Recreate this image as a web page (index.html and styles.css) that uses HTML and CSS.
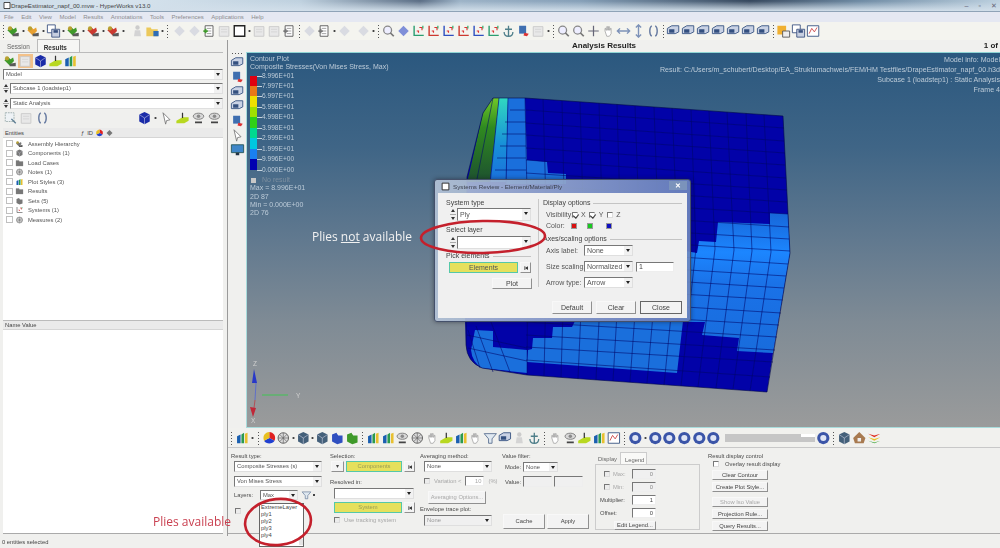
FILE: index.html
```html
<!DOCTYPE html>
<html lang="en">
<head>
<meta charset="utf-8">
<title>HyperWorks</title>
<link rel="stylesheet" href="styles.css">
</head>
<body>
<svg class="defs" width="0" height="0" aria-hidden="true">
  <symbol id="i-layer" viewBox="0 0 16 16"><path d="M1 7l4-4 3 3 3-2 1 4-5 5z" fill="currentColor"/><path d="M7 11l7-1v4H7z" fill="#5a5a5a"/><circle cx="4" cy="5" r="2.4" fill="#b8a030"/></symbol>
  <symbol id="i-folder" viewBox="0 0 16 16"><path d="M1 4h5l1 2h7v8H1z" fill="currentColor"/><path d="M9 8h6v6H9z" fill="#2f6db5"/></symbol>
  <symbol id="i-floppy" viewBox="0 0 16 16"><path d="M1 1h9v9H1z" fill="#fff" stroke="#39507f"/><path d="M6 6h9v9H6z" fill="#c7cfe0" stroke="#39507f"/><path d="M8 7h5v3H8z" fill="#39507f"/></symbol>
  <symbol id="i-doc" viewBox="0 0 16 16"><path d="M3 2h9v12H3z" fill="#fff" stroke="#555"/><path d="M5 5h5M5 8h5M5 11h5" stroke="#999"/><path d="M1 8h5M3.500 5.500v5" stroke="currentColor" stroke-width="2"/></symbol>
  <symbol id="i-square" viewBox="0 0 16 16"><path d="M2 2h12v12H2z" fill="#fff" stroke="#222" stroke-width="1.600"/></symbol>
  <symbol id="i-dim" viewBox="0 0 16 16"><path d="M2 3h11v11H2z" fill="#e8e8e8" stroke="#c8c8c8"/><path d="M4 6h7M4 9h7" stroke="#d4d4d4"/></symbol>
  <symbol id="i-diamond" viewBox="0 0 16 16"><path d="M8 2l6 6-6 6-6-6z" fill="currentColor"/></symbol>
  <symbol id="i-zoom" viewBox="0 0 16 16"><circle cx="7" cy="7" r="4.500" fill="#eef" stroke="#888" stroke-width="1.500"/><path d="M10 10l4 4" stroke="#777" stroke-width="2"/></symbol>
  <symbol id="i-axis" viewBox="0 0 16 16"><path d="M3 2v11h11" fill="none" stroke="currentColor" stroke-width="1.600"/><path d="M9 4h3v3M6 8h2v2" fill="none" stroke="#d33" stroke-width="1.300"/><path d="M13 2v3" stroke="#2a6" stroke-width="1.300"/></symbol>
  <symbol id="i-anchor" viewBox="0 0 16 16"><path d="M8 2v12M4 6h8M3 9c0 4 3 5 5 5s5-1 5-5" fill="none" stroke="#4f7f8a" stroke-width="1.500"/></symbol>
  <symbol id="i-flag" viewBox="0 0 16 16"><path d="M3 2h8v9H3z" fill="#3f6fb0"/><path d="M9 10l5 1-2 3-4-1z" fill="#d33"/></symbol>
  <symbol id="i-hand" viewBox="0 0 16 16"><path d="M4 8V5h1v2h1V3h1v4h1V3h1v4h1V5h1v6l-2 3H6z" fill="#fff" stroke="#999" stroke-width=".8"/></symbol>
  <symbol id="i-arrows" viewBox="0 0 16 16"><path d="M1 8h14M4 5L1 8l3 3M12 5l3 3-3 3" fill="none" stroke="#7d92b8" stroke-width="1.600"/></symbol>
  <symbol id="i-varrows" viewBox="0 0 16 16"><path d="M8 1v14M5 4l3-3 3 3M5 12l3 3 3-3" fill="none" stroke="#7d92b8" stroke-width="1.600"/></symbol>
  <symbol id="i-cross" viewBox="0 0 16 16"><path d="M8 2v12M2 8h12" fill="none" stroke="#667" stroke-width="1.400"/></symbol>
  <symbol id="i-brace" viewBox="0 0 16 16"><path d="M6 2C3 4 3 12 6 14M10 2c3 2 3 10 0 12" fill="none" stroke="#667aa0" stroke-width="1.600"/></symbol>
  <symbol id="i-view" viewBox="0 0 16 16"><path d="M1 5l5-3h8v7l-4 2H1z" fill="#c9d2e4" stroke="#34507f"/><path d="M3 6h6v4H3z" fill="#34507f"/></symbol>
  <symbol id="i-orange" viewBox="0 0 16 16"><path d="M1 2h10v10H1z" fill="#f0b030"/><path d="M7 8h8v7H7z" fill="#eee" stroke="#555"/></symbol>
  <symbol id="i-graph" viewBox="0 0 16 16"><path d="M1 2h13v12H1z" fill="#fff" stroke="#34507f"/><path d="M3 11l3-6 3 4 3-5" fill="none" stroke="#c44"/></symbol>
  <symbol id="i-bars" viewBox="0 0 16 16"><path d="M2 6l4-2v10H2z" fill="#1a5fb0"/><path d="M7 4l3-2v12H7z" fill="#2a9a50"/><path d="M11 3l3-1v12h-3z" fill="#e8c030"/></symbol>
  <symbol id="i-wheel" viewBox="0 0 16 16"><path d="M8 8V1a7 7 0 0 1 6 10z" fill="#e02020"/><path d="M8 8l6 3a7 7 0 0 1-12 0z" fill="#2040d0"/><path d="M8 8l-6 3A7 7 0 0 1 8 1z" fill="#e8c020"/></symbol>
  <symbol id="i-mesh" viewBox="0 0 16 16"><circle cx="8" cy="8" r="6" fill="#ddd" stroke="#555"/><path d="M2 8h12M8 2v12M4 4l8 8M12 4l-8 8" stroke="#666" stroke-width=".8"/></symbol>
  <symbol id="i-cube" viewBox="0 0 16 16"><path d="M8 1l6 3v8l-6 3-6-3V4z" fill="currentColor"/><path d="M8 8l6-4M8 8L2 4M8 8v7" stroke="#dde" stroke-width=".6"/></symbol>
  <symbol id="i-green" viewBox="0 0 16 16"><path d="M2 4l5-2 2 3h5v8l-6 2-6-3z" fill="currentColor"/></symbol>
  <symbol id="i-play" viewBox="0 0 16 16"><circle cx="8" cy="8" r="7" fill="currentColor"/><circle cx="8" cy="8" r="3.500" fill="#dfe5f5"/></symbol>
  <symbol id="i-house" viewBox="0 0 16 16"><path d="M8 1l7 7-2 6H3L1 8z" fill="#a87a50"/><path d="M6 8h4v4H6z" fill="#eee"/></symbol>
  <symbol id="i-stack" viewBox="0 0 16 16"><path d="M1 3l7 2 7-2-7 4z" fill="#e03020"/><path d="M1 7l7 2 7-2-7 4z" fill="#e8c020"/><path d="M1 11l7 2 7-2-7 3z" fill="#30a030"/></symbol>
  <symbol id="i-funnel" viewBox="0 0 16 16"><path d="M1 3h14l-5 6v5H6V9z" fill="#dfe8f0" stroke="#5a7090"/></symbol>
  <symbol id="i-disc" viewBox="0 0 16 16"><ellipse cx="8" cy="6" rx="6" ry="3.500" fill="#d8d8d8" stroke="#777"/><circle cx="8" cy="6" r="2" fill="#8a8a8a"/><path d="M4 13h8" stroke="#444" stroke-width="2"/></symbol>
  <symbol id="i-plate" viewBox="0 0 16 16"><path d="M1 11l7-4h7v4l-5 3H1z" fill="#b8d820"/><path d="M8 2v6" stroke="#333" stroke-width="1.400"/></symbol>
  <symbol id="i-pointer" viewBox="0 0 16 16"><path d="M4 2l8 8-4 1-1 4z" fill="#fff" stroke="#777"/></symbol>
  <symbol id="i-corner" viewBox="0 0 16 16"><path d="M2 2h10v10H2z" fill="#eef2f5" stroke="#9aa" stroke-dasharray="2 1"/><path d="M9 9l5 5" stroke="#5a7a90" stroke-width="1.500"/></symbol>
  <symbol id="i-person" viewBox="0 0 16 16"><circle cx="8" cy="4" r="2.500" fill="#ccc"/><path d="M4 14l1-7h6l1 7z" fill="#d4d4d4"/></symbol>
  <symbol id="i-tree" viewBox="0 0 16 16"><path d="M1 3h6l1 2h7v9H1z" fill="currentColor" stroke="#888" stroke-width=".6"/></symbol>
  <symbol id="i-skip" viewBox="0 0 16 16"><path d="M4 3h2v10H4zM13 3v10L6 8z" fill="#222"/></symbol>
  <symbol id="i-monitor" viewBox="0 0 16 16"><path d="M1 2h14v9H1z" fill="#3f86c8" stroke="#255"/><path d="M6 11h4v3H6z" fill="#234"/></symbol>
</svg>

<div class="app">
  <header class="title">
    <svg class="ic-t"><use href="#i-square"/></svg>
    <span class="title-text">DrapeEstimator_napf_00.mvw - HyperWorks v13.0</span>
    <span class="winbtns"><i>–</i><i>▫</i><i>✕</i></span>
  </header>
  <nav class="menu"><span>File</span><span>Edit</span><span>View</span><span>Model</span><span>Results</span><span>Annotations</span><span>Tools</span><span>Preferences</span><span>Applications</span><span>Help</span></nav>
  <div class="toolbar">
    <b class="sep"></b>
    <svg class="ic green"><use href="#i-layer"/></svg><em class="dot"></em>
    <svg class="ic orange"><use href="#i-layer"/></svg><em class="dot"></em>
    <svg class="ic"><use href="#i-floppy"/></svg><em class="dot"></em>
    <svg class="ic green"><use href="#i-layer"/></svg><em class="dot"></em>
    <svg class="ic red"><use href="#i-layer"/></svg><em class="dot"></em>
    <svg class="ic red"><use href="#i-layer"/></svg><em class="dot"></em>
    <svg class="ic ml4"><use href="#i-person"/></svg>
    <svg class="ic yellow"><use href="#i-folder"/></svg><em class="dot"></em>
    <b class="sep"></b>
    <svg class="ic pale ml2"><use href="#i-diamond"/></svg>
    <svg class="ic pale"><use href="#i-diamond"/></svg>
    <svg class="ic green"><use href="#i-doc"/></svg>
    <svg class="ic"><use href="#i-dim"/></svg>
    <svg class="ic"><use href="#i-square"/></svg><em class="dot"></em>
    <svg class="ic"><use href="#i-dim"/></svg>
    <svg class="ic"><use href="#i-dim"/></svg>
    <svg class="ic"><use href="#i-doc"/></svg>
    <b class="sep"></b>
    <svg class="ic pale"><use href="#i-diamond"/></svg>
    <svg class="ic"><use href="#i-doc"/></svg><em class="dot"></em>
    <svg class="ic pale"><use href="#i-diamond"/></svg>
    <svg class="ic pale ml4"><use href="#i-diamond"/></svg><em class="dot"></em>
    <b class="sep"></b>
    <svg class="ic"><use href="#i-zoom"/></svg>
    <svg class="ic violet"><use href="#i-diamond"/></svg>
    <svg class="ic teal"><use href="#i-axis"/></svg>
    <svg class="ic red"><use href="#i-axis"/></svg>
    <svg class="ic blue"><use href="#i-axis"/></svg>
    <svg class="ic red"><use href="#i-axis"/></svg>
    <svg class="ic blue"><use href="#i-axis"/></svg>
    <svg class="ic teal"><use href="#i-axis"/></svg>
    <svg class="ic"><use href="#i-anchor"/></svg>
    <svg class="ic"><use href="#i-flag"/></svg>
    <svg class="ic"><use href="#i-dim"/></svg><em class="dot"></em>
    <b class="sep"></b>
    <svg class="ic"><use href="#i-zoom"/></svg>
    <svg class="ic"><use href="#i-zoom"/></svg>
    <svg class="ic"><use href="#i-cross"/></svg>
    <svg class="ic"><use href="#i-hand"/></svg>
    <svg class="ic"><use href="#i-arrows"/></svg>
    <svg class="ic"><use href="#i-varrows"/></svg>
    <svg class="ic"><use href="#i-brace"/></svg>
    <b class="sep"></b>
    <svg class="ic"><use href="#i-view"/></svg>
    <svg class="ic"><use href="#i-view"/></svg>
    <svg class="ic"><use href="#i-view"/></svg>
    <svg class="ic"><use href="#i-view"/></svg>
    <svg class="ic"><use href="#i-view"/></svg>
    <svg class="ic"><use href="#i-view"/></svg>
    <svg class="ic"><use href="#i-view"/></svg>
    <b class="sep"></b>
    <svg class="ic"><use href="#i-orange"/></svg>
    <svg class="ic"><use href="#i-floppy"/></svg>
    <svg class="ic"><use href="#i-graph"/></svg>
  </div>

  <div class="work">
    <aside class="left">
      <div class="tabs"><span class="tab">Session</span><span class="tab active">Results</span></div>
      <div class="iconrow">
        <svg class="ic green"><use href="#i-layer"/></svg>
        <svg class="ic pressed"><use href="#i-dim"/></svg>
        <svg class="ic navy"><use href="#i-cube"/></svg>
        <svg class="ic red"><use href="#i-plate"/></svg>
        <svg class="ic"><use href="#i-bars"/></svg>
      </div>
      <div class="combo full"><span>Model</span></div>
      <div class="spin-row"><span class="spin"></span><div class="combo grow"><span>Subcase 1 (loadstep1)</span></div></div>
      <div class="spin-row"><span class="spin"></span><div class="combo grow"><span>Static Analysis</span></div></div>
      <div class="tools">
        <svg class="ic"><use href="#i-corner"/></svg>
        <svg class="ic"><use href="#i-dim"/></svg>
        <svg class="ic"><use href="#i-brace"/></svg>
        <span class="fill"></span>
        <svg class="ic navy"><use href="#i-cube"/></svg><em class="dot"></em>
        <svg class="ic"><use href="#i-pointer"/></svg>
        <svg class="ic"><use href="#i-plate"/></svg>
        <svg class="ic"><use href="#i-disc"/></svg>
        <svg class="ic"><use href="#i-disc"/></svg>
      </div>
      <div class="listhead"><span>Entities</span><span class="headicons"><i>ƒ</i><i>ID</i><svg class="mini"><use href="#i-wheel"/></svg><svg class="mini violet"><use href="#i-diamond"/></svg></span></div>
      <ul class="tree">
        <li class="indent"><svg class="mini"><use href="#i-layer"/></svg>Assembly Hierarchy</li>
        <li><svg class="mini navy"><use href="#i-cube"/></svg>Components (1)</li>
        <li><svg class="mini yellow"><use href="#i-tree"/></svg>Load Cases</li>
        <li><svg class="mini"><use href="#i-mesh"/></svg>Notes (1)</li>
        <li><svg class="mini"><use href="#i-bars"/></svg>Plot Styles (3)</li>
        <li><svg class="mini yellow"><use href="#i-tree"/></svg>Results</li>
        <li><svg class="mini green"><use href="#i-green"/></svg>Sets  (5)</li>
        <li><svg class="mini yellow"><use href="#i-axis"/></svg>Systems (1)</li>
        <li><svg class="mini"><use href="#i-mesh"/></svg>Measures (2)</li>
      </ul>
      <div class="listhead second"><span>Name Value</span></div>
      <div class="props"></div>
    </aside>

    <main class="right">
      <div class="caption"><span class="cap-title">Analysis Results</span><span class="cap-page">1 of</span></div>
      <div class="viewrow">
        <div class="vstrip">
          <b class="hdots"></b>
          <svg class="ic red"><use href="#i-view"/></svg>
          <svg class="ic"><use href="#i-flag"/></svg>
          <svg class="ic"><use href="#i-view"/></svg>
          <svg class="ic"><use href="#i-view"/></svg>
          <svg class="ic"><use href="#i-flag"/></svg>
          <svg class="ic"><use href="#i-pointer"/></svg>
          <svg class="ic"><use href="#i-monitor"/></svg>
        </div>
        <section class="viewport">
          <svg class="mesh" viewBox="246 52 754 376" aria-hidden="true">
            <defs>
              <linearGradient id="teal" x1="0" y1="0" x2="0" y2="1"><stop offset="0" stop-color="#30d8c0"/><stop offset=".55" stop-color="#1890d8"/><stop offset="1" stop-color="#1a6fdc"/></linearGradient>
              <linearGradient id="olive" x1="0" y1="0" x2="0" y2="1"><stop offset="0" stop-color="#70c828"/><stop offset=".35" stop-color="#2f8a20"/><stop offset="1" stop-color="#1d5030"/></linearGradient>
              <linearGradient id="lit" x1="0" y1="0" x2="0" y2="1"><stop offset="0" stop-color="#1766d8"/><stop offset=".28" stop-color="#1c86ff"/><stop offset=".5" stop-color="#1a72e8"/><stop offset="1" stop-color="#186cdc"/></linearGradient>
            </defs>
            <path class="m-dark" d="M493 98H525L783 116L788 213L790 253L773 353L767 392L527 375L482 368Q467 362 466 345L465 320L467 177L483 113Z"/>
            <path fill="url(#olive)" d="M493 98L499 98L490 182H467L470 170L483 113Z"/>
            <path fill="url(#teal)" d="M499 98H508L506 182H490Z"/>
            <path class="m-light" d="M508 98H525L527 160L547 162L548 173L566 174V184H506Z"/>
            <path fill="url(#lit)" d="M770 213L788 214L790 253L773 353L737 351L739 338L702 335L705 322H680V250L697 253L699 241L716 242L718 222L770 224Z"/>
            <path class="m-light" d="M575 321H683L677 373L527 362L528 350L532 349L533 338L552 338L553 327L572 327Z"/>
            <path class="m-light" d="M475 330L493 331V347L527 350V373L482 368Q472 362 471 350Z"/>
            <path class="m-grid" d="M525 98L528 240L527 375M543 99L547 241L544 376M562 101L565 242L561 377M580 102L584 243L578 379M599 103L603 244L596 380M617 104L621 245L613 381M635 106L640 245L630 382M654 107L659 246L647 383M672 108L678 247L664 385M691 110L696 248L681 386M709 111L715 249L698 387M727 112L734 250L716 388M746 113L752 251L733 389M764 115L771 252L750 391"/>
            <path class="m-grid" d="M526 110L784 128M526 123L784 141M526 135L785 153M526 148L785 165M526 160L786 178M526 173L787 190M526 185L787 202M526 198L788 214M526 210L789 227M526 223L789 239M526 235L790 251M526 247L788 264M526 260L786 276M526 272L784 288M526 285L783 300M526 297L781 313M526 310L779 325M526 322L777 337M526 335L775 350M526 347L773 362M526 360L770 377"/>
            <path class="m-grid" d="M508 98L506 184M499 98L490 184M493 98L476 184M468 330L480 368M476 326L493 372M491 322L510 372M510 110H525M505 122H526M502 134H526M500 146H526M497 158H526M495 170H526M467 335L527 348M468 348L527 361"/>
            <path class="m-edge" d="M493 98H525L783 116L790 253L767 392L527 375L482 368Q467 362 466 345L467 177L483 113Z"/>
            <path class="ax-z" d="M256 383L255 400"/><path class="ax-z-h" d="M254 369L257 383L252 383Z"/>
            <path class="ax-y" d="M262 395H288"/><path class="ax-x" d="M255 400L254 408"/><path class="ax-x-h" d="M253 417L250 407L256 408Z"/>
            <text class="ax-l" x="253" y="366">Z</text><text class="ax-l" x="296" y="398">Y</text><text class="ax-l" x="251" y="423">X</text>
          </svg>
          <div class="legend">
            <p>Contour Plot</p>
            <p>Composite Stresses(Von Mises Stress, Max)</p>
            <div class="scale">
              <div class="bar"><i class="s1"></i><i class="s2"></i><i class="s3"></i><i class="s4"></i><i class="s5"></i><i class="s6"></i><i class="s7"></i><i class="s8"></i><i class="s9"></i></div>
              <div class="labels"><span>8.996E+01</span><span>7.997E+01</span><span>6.997E+01</span><span>5.998E+01</span><span>4.998E+01</span><span>3.998E+01</span><span>2.999E+01</span><span>1.999E+01</span><span>9.996E+00</span><span>0.000E+00</span></div>
            </div>
            <p class="nores"><i></i>No result</p>
            <p>Max = 8.996E+01</p>
            <p>2D 87</p>
            <p>Min = 0.000E+00</p>
            <p>2D 76</p>
          </div>
          <div class="info">
            <p>Model info: Model</p>
            <p>Result: C:/Users/m_schubert/Desktop/EA_Struktumachweis/FEM/HM Testfiles/DrapeEstimator_napf_00.h3d</p>
            <p>Subcase 1 (loadstep1) : Static Analysis</p>
            <p>Frame 4</p>
          </div>
          <p class="note-a">Plies <u>not</u> available</p>
          <div class="dialog">
            <div class="dlg-title"><svg class="dlg-ic"><use href="#i-square"/></svg><span>Systems Review - Element/Material/Ply</span><b class="dlg-x">✕</b></div>
            <div class="dlg-body">
              <div class="dlg-top">
                <div class="dlg-left">
                  <p>System type</p>
                  <div class="spin-row d1"><span class="spin"></span><div class="combo dc"><span>Ply</span></div></div>
                  <p class="d2">Select layer</p>
                  <div class="spin-row d3"><span class="spin"></span><div class="combo dc"></div></div>
                  <p class="d4 rule">Pick elements</p>
                  <div class="dlg-pick"><span class="yellow-btn de">Elements</span><span class="btn skip"><svg class="sk"><use href="#i-skip"/></svg></span></div>
                  <div class="dlg-plot"><span class="btn dp">Plot</span></div>
                </div>
                <div class="dlg-right">
                  <p class="rule">Display options</p>
                  <div class="vis"><span class="k">Visibility:</span><label class="cb on"></label><span>X</span><label class="cb on"></label><span>Y</span><label class="cb"></label><span>Z</span></div>
                  <div class="colors"><span class="k">Color:</span><i class="cr"></i><i class="cg"></i><i class="cbl"></i></div>
                  <p class="rule d5">Axes/scaling options</p>
                  <div class="drow"><span class="k2">Axis label:</span><div class="combo dw"><span>None</span></div></div>
                  <div class="drow"><span class="k2">Size scaling:</span><div class="combo dw"><span>Normalized</span></div><div class="field dfield">1</div></div>
                  <div class="drow"><span class="k2">Arrow type:</span><div class="combo dw"><span>Arrow</span></div></div>
                </div>
              </div>
              <div class="dlg-btns"><span class="btn db">Default</span><span class="btn db">Clear</span><span class="btn db close">Close</span></div>
            </div>
          </div>
        </section>
      </div>

      <div class="bottombar">
        <b class="sep"></b>
        <svg class="ic"><use href="#i-bars"/></svg><em class="dot"></em>
        <b class="sep"></b>
        <svg class="ic"><use href="#i-wheel"/></svg>
        <svg class="ic"><use href="#i-mesh"/></svg><em class="dot"></em>
        <svg class="ic slate"><use href="#i-cube"/></svg><em class="dot"></em>
        <svg class="ic slate"><use href="#i-cube"/></svg>
        <svg class="ic blue"><use href="#i-green"/></svg>
        <svg class="ic green"><use href="#i-green"/></svg>
        <b class="sep"></b>
        <svg class="ic"><use href="#i-bars"/></svg>
        <svg class="ic"><use href="#i-bars"/></svg>
        <svg class="ic"><use href="#i-disc"/></svg>
        <svg class="ic"><use href="#i-mesh"/></svg>
        <svg class="ic"><use href="#i-hand"/></svg>
        <svg class="ic"><use href="#i-plate"/></svg>
        <svg class="ic"><use href="#i-bars"/></svg>
        <svg class="ic"><use href="#i-hand"/></svg>
        <svg class="ic"><use href="#i-funnel"/></svg>
        <svg class="ic"><use href="#i-view"/></svg>
        <svg class="ic"><use href="#i-person"/></svg>
        <svg class="ic"><use href="#i-anchor"/></svg>
        <b class="sep"></b>
        <svg class="ic"><use href="#i-hand"/></svg>
        <svg class="ic"><use href="#i-disc"/></svg>
        <svg class="ic"><use href="#i-plate"/></svg>
        <svg class="ic"><use href="#i-bars"/></svg>
        <svg class="ic"><use href="#i-graph"/></svg>
        <b class="sep"></b>
        <svg class="ic navyb"><use href="#i-play"/></svg><em class="dot"></em>
        <svg class="ic navyb"><use href="#i-play"/></svg>
        <svg class="ic navyb"><use href="#i-play"/></svg>
        <svg class="ic navyb"><use href="#i-play"/></svg>
        <svg class="ic navyb"><use href="#i-play"/></svg>
        <svg class="ic navyb"><use href="#i-play"/></svg>
        <span class="slider"><i></i></span>
        <svg class="ic navyb"><use href="#i-play"/></svg>
        <b class="sep"></b>
        <svg class="ic slate"><use href="#i-cube"/></svg>
        <svg class="ic"><use href="#i-house"/></svg>
        <svg class="ic"><use href="#i-stack"/></svg>
      </div>

      <div class="panel">
        <div class="grp g-result">
          <p>Result type:</p>
          <div class="combo gw1 m1"><span>Composite Stresses (s)</span></div>
          <div class="combo gw1 m4"><span>Von Mises Stress</span></div>
          <div class="layers"><span>Layers:</span><div class="combo lw"><span>Max</span></div><svg class="fn"><use href="#i-funnel"/></svg><em class="dot"></em></div>
          <label class="cb dim m8"></label>
          <ul class="droplist"><li>ExtremeLayer</li><li>ply1</li><li>ply2</li><li>ply3</li><li>ply4</li></ul>
        </div>
        <div class="grp g-sel">
          <p>Selection:</p>
          <div class="hrow m1"><span class="btn arrowbtn">▾</span><span class="yellow-btn y1">Components</span><span class="btn skip"><svg class="sk"><use href="#i-skip"/></svg></span></div>
          <p class="m6">Resolved in:</p>
          <div class="combo sw m2"></div>
          <div class="hrow m3 ind"><span class="yellow-btn y2">System</span><span class="btn skip"><svg class="sk"><use href="#i-skip"/></svg></span></div>
          <div class="chk m3 ind"><label class="cb dim"></label><span class="off">Use tracking system</span></div>
        </div>
        <div class="grp g-avg">
          <p>Averaging method:</p>
          <div class="combo aw m1"><span>None</span></div>
          <div class="chk m4 ind"><label class="cb dim"></label><span class="off">Variation &lt;</span><span class="field small off">10</span><span class="off">(%)</span></div>
          <span class="btn optbtn off m5">Averaging Options...</span>
          <p class="m1">Envelope trace plot:</p>
          <div class="combo aw m2 disabled"><span>None</span></div>
        </div>
        <div class="grp g-filter">
          <p>Value filter:</p>
          <div class="frow"><span>Mode:</span><div class="combo fw"><span>None</span></div></div>
          <div class="frow f2"><span>Value:</span><span class="field vf"></span><span class="field vf"></span></div>
          <div class="fbtns"><span class="btn fb">Cache</span><span class="btn fb">Apply</span></div>
        </div>
        <div class="grp g-tabs">
          <div class="ltabs"><span>Display</span><span class="active">Legend</span></div>
          <div class="lbox">
            <div class="lrow"><label class="cb dim"></label><span class="lk off">Max:</span><span class="field num off">0</span></div>
            <div class="lrow"><label class="cb dim"></label><span class="lk off">Min:</span><span class="field num off">0</span></div>
            <div class="lrow"><span class="lw2">Multiplier:</span><span class="field num white">1</span></div>
            <div class="lrow"><span class="lw2">Offset:</span><span class="field num white">0</span></div>
            <div class="lrow last"><span class="btn edit">Edit Legend...</span></div>
          </div>
        </div>
        <div class="grp g-disp">
          <p>Result display control</p>
          <div class="chk ovl"><label class="cb"></label><span>Overlay result display</span></div>
          <span class="btn dbtn">Clear Contour</span>
          <span class="btn dbtn">Create Plot Style...</span>
          <span class="btn dbtn off gap">Show Iso Value</span>
          <span class="btn dbtn">Projection Rule...</span>
          <span class="btn dbtn">Query Results...</span>
        </div>
      </div>
    </main>
  </div>
  <footer class="status">0 entities selected</footer>
  <p class="note-b">Plies available</p>
  <svg class="marks" viewBox="0 0 1000 548" aria-hidden="true">
    <ellipse class="ring" cx="483" cy="237" rx="62" ry="16" transform="rotate(-1 483 237)"/>
    <ellipse class="ring" cx="278" cy="522" rx="33" ry="23" transform="rotate(-6 278 522)"/>
  </svg>
</div>
</body>
</html>
```
FILE: styles.css
```css
* { box-sizing: border-box; }
html, body { margin: 0; padding: 0; }
body { width: 1000px; height: 548px; overflow: hidden; background: #f0f0ee; font-family: "Liberation Sans", Arial, sans-serif; font-size: 5.800px; line-height: 8px; color: #4a4a4a; white-space: nowrap; }
p, ul { margin: 0; padding: 0; list-style: none; }
.defs { position: absolute; }
.app { position: relative; width: 1000px; height: 548px; display: flex; flex-direction: column; overflow: hidden; filter: blur(0.45px); }

.title { height: 12px; flex: none; display: flex; align-items: center; padding-left: 3px; background: linear-gradient(rgba(216,228,238,0) 10%, #d2dfea 100%), linear-gradient(90deg, #cbdbe8 0, #d7e4ee 12%, #bfd1df 30%, #5c6f86 42%, #9db3c7 46%, #86a0b8 58%, #37495f 75%, #6f8ba4 86%, #bcd0df 100%); border-bottom: 1px solid #8fa3b7; }
.ic-t { width: 8px; height: 9px; }
.title-text { margin-left: 0; font-size: 6.200px; color: #444; }
.winbtns { margin-left: auto; display: flex; gap: 10px; padding-right: 3px; color: #667; font-size: 7px; }
.winbtns i { font-style: normal; }

.menu { height: 10px; flex: none; display: flex; align-items: center; gap: 7.500px; padding-left: 4px; background: #e5e8f2; color: #8c8c90; font-size: 6px; }
.toolbar { height: 18px; flex: none; display: flex; align-items: center; padding-left: 1px; background: #f4f4ef; }
.ic { width: 15px; height: 14px; flex: none; color: #777; }
.sep { flex: none; width: 5px; height: 14px; background: radial-gradient(circle, #555 0.6px, transparent 0.9px) center top / 3px 3px repeat-y; }
.dot { flex: none; width: 5px; height: 4px; background: radial-gradient(circle, #444 1px, transparent 1.200px) center no-repeat; }
.ml2 { margin-left: 2px; }
.ml4 { margin-left: 4px; }
.green { color: #3f9a2a; }
.orange { color: #e8a030; }
.red { color: #cc3a30; }
.yellow { color: #ecc95a; }
.pale { color: #d9dbe2; }
.violet { color: #7f8fd8; }
.teal { color: #2c9e70; }
.blue { color: #3050c0; }
.navy { color: #1a2ba8; }
.navyb { color: #3b55a8; }
.slate { color: #44607a; }

.work { flex: 1; display: flex; min-height: 0; }
.left { width: 228px; flex: none; display: flex; flex-direction: column; padding: 0 4px 0 3px; border-right: 1px solid #9a9a9a; }
.tabs { height: 13px; flex: none; display: flex; align-items: flex-end; padding-left: 4px; border-bottom: 1px solid #bbb; }
.tab { padding: 0 7px 1px 0; font-size: 6.400px; color: #666; }
.tab.active { height: 13px; padding: 4px 12px 0 6px; font-weight: bold; border: 1px solid #bbb; border-bottom: 0; background: #f6f6f4; color: #333; margin-left: 0; }
.iconrow { height: 15px; flex: none; display: flex; gap: 0; align-items: center; }
.pressed { background: #f3c189; }
.combo { position: relative; height: 11px; background: #fff; border: 1px solid; border-color: #777 #dfdfdf #dfdfdf #777; padding: 0 10px 0 2px; line-height: 9px; color: #555; overflow: hidden; }
.combo::after { content: ""; position: absolute; right: 0; top: 0; bottom: 0; width: 8px; background: #f1f1f1; }
.combo::before { content: ""; position: absolute; z-index: 1; right: 2px; top: 3px; border: 2px solid transparent; border-top: 3px solid #222; border-bottom: 0; }
.full { margin-top: 1px; }
.spin-row { display: flex; align-items: stretch; gap: 1px; margin-top: 3px; }
.spin-row + .spin-row { margin-top: 4px; }
.spin { flex: none; width: 6px; background: linear-gradient(#f0f0f0 49%, #aaa 49%, #aaa 51%, #f0f0f0 51%); position: relative; }
.spin::before { content: ""; position: absolute; left: 1px; top: 1px; border: 2px solid transparent; border-bottom: 3px solid #333; border-top: 0; }
.spin::after { content: ""; position: absolute; left: 1px; bottom: 1px; border: 2px solid transparent; border-top: 3px solid #333; border-bottom: 0; }
.grow { flex: 1; }
.tools { height: 15px; margin-top: 1px; flex: none; display: flex; align-items: center; gap: 1px; padding-right: 1px; }
.fill { flex: 1; }
.listhead { height: 10px; margin-top: 3px; flex: none; display: flex; align-items: center; gap: 56px; padding-left: 2px; background: #eaeaea; border-bottom: 1px solid #d5d5d5; color: #444; }
.headicons { display: flex; align-items: center; gap: 1px; }
.headicons i { font-style: normal; padding: 0 1px; }
.mini { width: 9px; height: 8px; flex: none; color: #777; }
.tree { height: 182px; flex: none; padding: 1px 0 0 3px; background: #fff; color: #555; }
.tree li { height: 9.500px; display: flex; align-items: center; gap: 4px; position: relative; }
.tree li::before { content: ""; width: 5px; height: 5px; flex: none; border: 1px solid #c0c0c0; margin-right: -2px; }
.second { margin-top: 0; border-top: 1px solid #bbb; }
.props { flex: 1; background: #fff; margin-bottom: 2px; border-bottom: 1px solid #aaa; }

.right { flex: 1; min-width: 0; display: flex; flex-direction: column; }
.caption { height: 12px; flex: none; display: flex; align-items: center; padding-right: 2px; font-size: 8px; font-weight: bold; color: #222; }
.cap-title { margin-left: 344px; }
.cap-page { margin-left: auto; }
.viewrow { height: 376px; flex: none; display: flex; }
.vstrip { width: 18px; flex: none; display: flex; flex-direction: column; align-items: center; gap: 0.500px; padding-left: 1px; }
.hdots { height: 3px; width: 13px; background: radial-gradient(circle, #555 .6px, transparent .9px) left center / 3px 3px repeat-x; }
.viewport { position: relative; flex: 1; display: flex; justify-content: space-between; background: linear-gradient(#2b587f 0, #3f6586 25%, #61798f 50%, #7f8b95 72%, #9a9b9b 100%); border-top: 1px solid #8fd4d4; border-left: 1px solid #a8dcdc; border-bottom: 1px solid #a8dcdc; color: #bccbd8; font-size: 7px; overflow: hidden; }
.mesh { position: absolute; left: -1px; top: -1px; width: 754px; height: 376px; }
.m-dark { fill: #0202a8; }
.m-light { fill: #1a6fdc; }
.m-grid { fill: none; stroke: #00086a; stroke-width: .7; opacity: .8; }
.m-edge { fill: none; stroke: #00084a; stroke-width: .6; }
.ax-z { stroke: #6070c8; stroke-width: 1; }
.ax-z-h { fill: #2838c8; }
.ax-y { stroke: #58b868; stroke-width: 1.400; }
.ax-x { stroke: #b05058; stroke-width: 1; }
.ax-x-h { fill: #c02838; }
.ax-l { fill: #d0d0d0; font-size: 6.500px; font-family: "Liberation Sans", Arial, sans-serif; }
.legend { position: relative; padding: 2px 0 0 3px; line-height: 8.300px; }
.scale { display: flex; margin-top: -1px; }
.bar { width: 7px; margin-top: 5px; height: 94px; display: flex; flex-direction: column; }
.bar i { flex: 1; }
.s1 { background: #e00010; }
.s2 { background: #e87818; }
.s3 { background: #f0e000; }
.s4 { background: #a0e000; }
.s5 { background: #30d018; }
.s6 { background: #00d890; }
.s7 { background: #00c8e0; }
.s8 { background: #1a80f0; }
.s9 { background: #0000b0; }
.labels { display: flex; flex-direction: column; }
.labels span { height: 10.440px; line-height: 10.440px; padding-left: 5px; position: relative; font-size: 6.600px; }
.labels span::before { content: ""; position: absolute; left: 0; top: 5px; width: 5px; height: 1px; background: #c6d4de; }
.nores { margin-top: 1px; color: #7d8fa0; display: flex; align-items: center; }
.nores i { width: 5px; height: 5px; background: #c8c8c8; margin: 0 6px 0 1px; }
.info { position: relative; text-align: right; padding-top: 2px; font-size: 7.100px; line-height: 10px; color: #bccbd8; }
.note-a { position: absolute; left: 65px; top: 177px; color: #f2f2f2; font-family: "Open Sans", sans-serif; font-size: 12px; line-height: 14px; }
.note-b { position: absolute; left: 153px; top: 515px; color: #c94050; font-family: "Open Sans", sans-serif; font-size: 12px; line-height: 14px; }
.marks { position: absolute; left: 0; top: 0; width: 1000px; height: 548px; pointer-events: none; }
.ring { fill: none; stroke: #c4202c; stroke-width: 2.600; }

.dialog { position: absolute; left: 187px; top: 126px; width: 257px; height: 143px; padding: 0 3px 3px; display: flex; flex-direction: column; background: linear-gradient(90deg, rgba(180,195,215,.92), rgba(110,135,190,.9)); border: 1px solid #44506a; border-radius: 3px; box-shadow: 0 0 4px rgba(20,20,30,.5); }
.dlg-title { height: 13px; flex: none; display: flex; align-items: center; color: #3a3f4c; font-size: 6.250px; }
.dlg-ic { width: 9px; height: 9px; margin: 0 3px 0 3px; }
.dlg-x { margin-left: auto; width: 18px; height: 9px; margin-top: -3px; text-align: center; background: #7b93bb; color: #fff; font-size: 7px; line-height: 9px; }
.dlg-body { flex: 1; background: #f0f0f0; display: flex; flex-direction: column; padding: 6px 5px 4px 8px; color: #444; }
.dlg-top { display: flex; flex: 1; }
.dlg-left { width: 93px; padding-right: 7px; border-right: 1px solid #c8c8c8; height: 88px; }
.d1 { margin-top: 1px; margin-left: 4px; }
.dc { width: 75px; height: 13px; line-height: 11px; }
.d2 { margin-top: 5px; }
.d3 { margin-top: 2px; margin-left: 4px; }
.d4 { margin-top: 3px; }
.rule { position: relative; overflow: hidden; }
.rule::after { content: ""; position: absolute; top: 4px; margin-left: 3px; width: 200px; height: 1px; background: #c4c4c4; }
.dlg-pick { display: flex; gap: 2px; margin-top: 2px; margin-left: 3px; }
.yellow-btn { display: block; height: 11px; background: #e6e05c; border: 1px solid #55c8a8; text-align: center; line-height: 9px; color: #555; }
.de { width: 69px; }
.btn { display: block; background: #f3f3f3; border: 1px solid; border-color: #f8f8f8 #909090 #909090 #f8f8f8; text-align: center; color: #444; line-height: 9px; }
.skip { width: 11px; height: 11px; display: flex; align-items: center; justify-content: center; }
.sk { width: 6px; height: 6px; }
.dlg-plot { display: flex; justify-content: flex-end; margin-top: 5px; margin-right: -1px; }
.dp { width: 40px; height: 11px; }
.dlg-right { flex: 1; padding-left: 4px; }
.vis { display: flex; align-items: center; gap: 3.500px; height: 11px; margin-top: 2px; padding-left: 3px; }
.vis, .colors, .k2 { color: #555; }
.k { width: 22px; flex: none; }
.colors { display: flex; align-items: center; gap: 10px; height: 11px; padding-left: 3px; }
.colors .k { width: 15px; }
.colors i { width: 6px; height: 6px; border: 1px solid #999; }
.cr { background: #d81010; }
.cg { background: #18c820; }
.cbl { background: #1010c0; margin-left: 3px; }
.d5 { margin-top: 4px; }
.drow { display: flex; align-items: center; gap: 3px; height: 15px; padding-left: 3px; }
.drow + .drow { margin-top: 1px; }
.k2 { width: 35px; flex: none; }
.dw { width: 49px; }
.field { display: block; background: #fff; border: 1px solid; border-color: #777 #eee #eee #777; line-height: 8px; }
.dfield { width: 38px; height: 10px; padding-left: 2px; }
.dlg-btns { display: flex; justify-content: flex-end; gap: 4px; flex: none; }
.db { width: 40px; height: 13px; line-height: 11px; }
.close { outline: 1px solid #666; outline-offset: -1px; width: 42px; }
.cb { display: inline-block; flex: none; position: relative; width: 6px; height: 6px; background: #fff; border: 1px solid; border-color: #777 #ddd #ddd #777; }
.cb.on::after { content: ""; position: absolute; left: 1px; top: 0; width: 3px; height: 4px; border: solid #333; border-width: 0 1px 1px 0; transform: rotate(40deg); }
.cb.dim { background: #ececec; }

.bottombar { height: 20px; flex: none; display: flex; align-items: center; background: #f1f1ee; border-bottom: 1px solid #c8c8c8; }
.bottombar .ic { width: 14.600px; }
.bottombar .sep { margin: 0 1px; }
.slider { flex: none; width: 90px; height: 8px; margin: 0 1px 0 4px; position: relative; background: linear-gradient(#c6c6c6 45%, #f2f2f2 45%, #f2f2f2 55%, #c6c6c6 55%); }
.slider i { position: absolute; right: 0; top: 0; width: 14px; height: 3px; background: #fff; }
.panel { height: 86px; flex: none; display: flex; padding: 4px 0 0 3px; border-bottom: 1px solid #aaa; color: #4a4a4a; }
.grp { flex: none; display: flex; flex-direction: column; align-items: flex-start; position: relative; }
.m1 { margin-top: 1px; }
.m2 { margin-top: 2px; }
.m3 { margin-top: 3px; }
.m4 { margin-top: 4px; }
.m5 { margin-top: 5px; }
.m6 { margin-top: 6px; }
.m8 { margin-top: 8px; }
.g-result { width: 99px; }
.gw1 { width: 88px; margin-left: 3px; }
.layers { display: flex; align-items: center; margin: 3px 0 0 3px; height: 10px; }
.layers > span { width: 26px; }
.lw { width: 38px; height: 10px; line-height: 8px; }
.fn { width: 11px; height: 10px; margin-left: 3px; }
.layers .dot { width: 4px; }
.g-result .cb { margin-left: 4px; }
.droplist { position: absolute; left: 28px; top: 51px; width: 45px; height: 44px; background: #fff; border: 1px solid #666; padding: 0 0 0 1px; line-height: 7.100px; color: #444; }
.droplist::after { content: ""; position: absolute; right: 0; bottom: 1px; width: 4px; height: 6px; background: #e4e4e4; }
.g-sel { width: 90px; }
.hrow { display: flex; gap: 2px; align-items: stretch; margin-left: 1px; }
.ind { margin-left: 4px; }
.arrowbtn { width: 13px; height: 11px; }
.y1 { width: 56px; color: #999c55; }
.y2 { width: 68px; color: #999c55; }
.sw { width: 80px; margin-left: 4px; }
.chk { display: flex; align-items: center; gap: 4px; }
.off { color: #a8a8a8; }
.g-avg { width: 82px; }
.aw { width: 68px; margin-left: 4px; }
.disabled { background: #f0f0f0; color: #999; }
.small { width: 19px; height: 10px; text-align: right; padding-right: 2px; }
.optbtn { width: 58px; height: 13px; line-height: 11px; margin-left: 8px; }
.g-filter { width: 93px; height: 77px; }
.frow { display: flex; align-items: center; gap: 2px; margin: 2px 0 0 3px; }
.frow > span:first-child { width: 16px; }
.f2 { margin-top: 4px; }
.fw { width: 35px; height: 10px; line-height: 8px; }
.vf { width: 29px; height: 11px; background: #f0f0f0; }
.fbtns { display: flex; gap: 2px; margin-top: auto; margin-left: 1px; }
.fb { width: 42px; height: 15px; line-height: 13px; }
.g-tabs { width: 113px; }
.ltabs { display: flex; height: 12px; align-items: flex-end; margin-left: 3px; }
.ltabs span { padding: 0 2px 1px 0; color: #666; width: 22px; }
.ltabs .active { height: 12px; width: 27px; padding: 3px 4px 0; background: #f9f9f7; border: 1px solid #ccc; border-bottom: 0; }
.lbox { width: 105px; height: 66px; border: 1px solid #ccc; padding: 2px 0 0 4px; }
.lrow { display: flex; align-items: center; height: 13px; }
.lk { margin-left: 3px; width: 19px; }
.lrow .cb { margin-left: 4px; }
.lw2 { width: 32px; }
.num { width: 24px; height: 10px; text-align: right; padding-right: 2px; background: #f0f0f0; color: #888; }
.white { background: #fff; color: #444; }
.last { justify-content: flex-end; padding-right: 43px; }
.edit { width: 42px; height: 9px; line-height: 7px; }
.g-disp { width: 70px; }
.ovl { margin: 0 0 1px 5px; gap: 6px; }
.dbtn { width: 56px; height: 10px; margin: 1px 0 1px 4px; line-height: 8px; }
.gap { margin-top: 4px; }
.status { height: 12px; flex: none; padding: 2px 0 0 2px; color: #444; }
```
